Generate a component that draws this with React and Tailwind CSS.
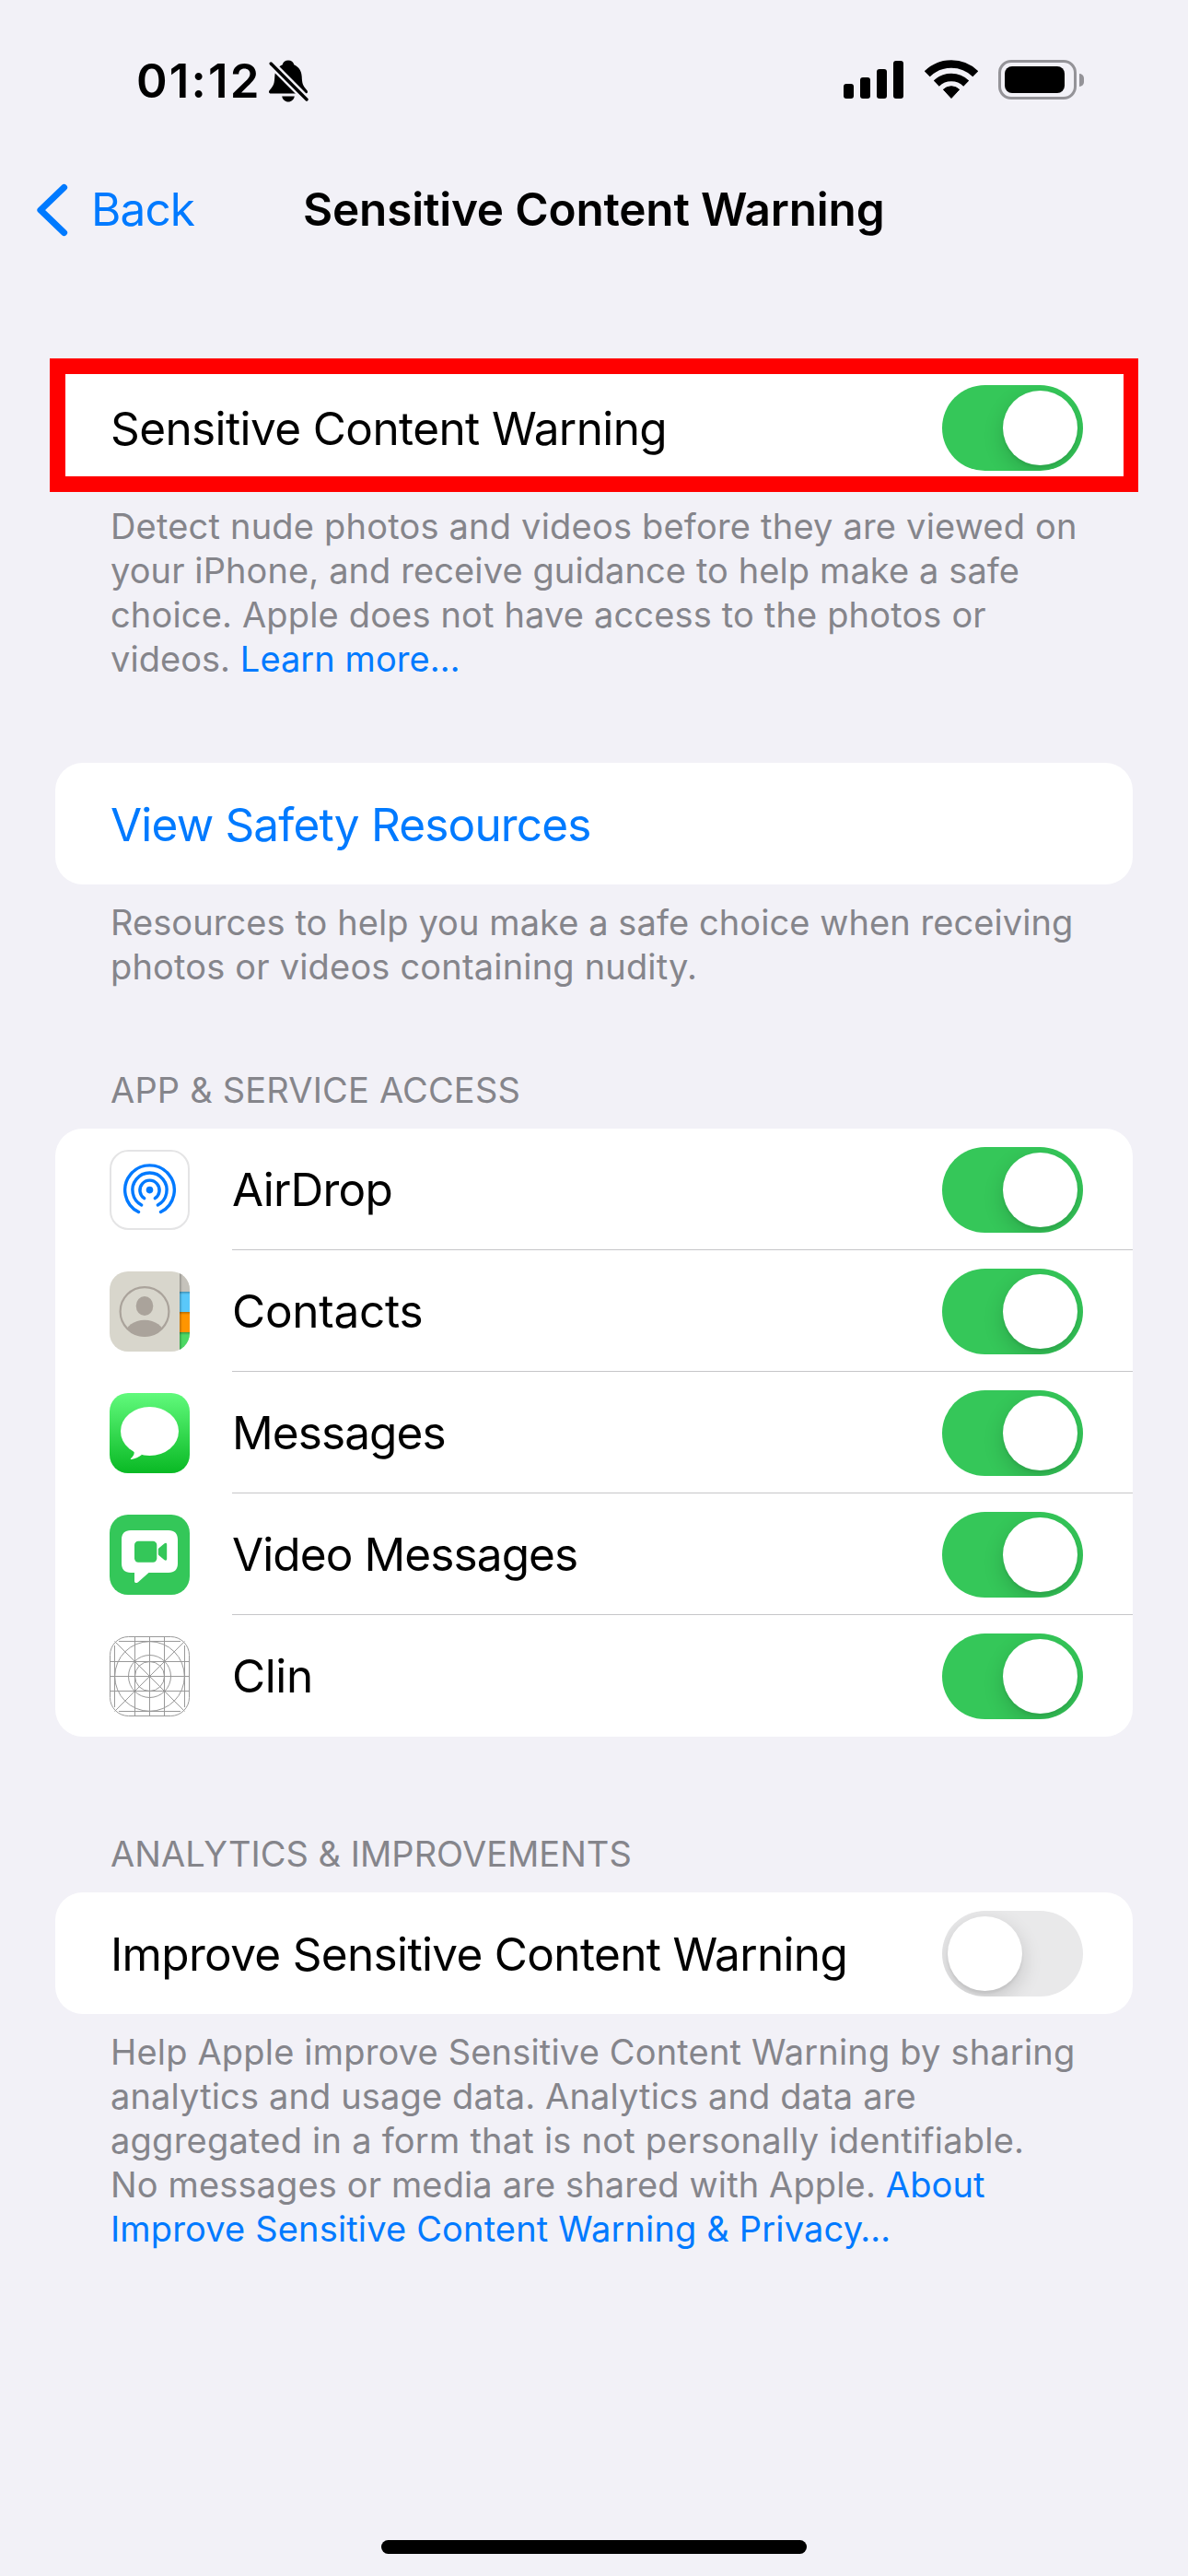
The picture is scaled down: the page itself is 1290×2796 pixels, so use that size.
function BellSlash() {
  return (
    <svg className="ml-[8.500px] h-[47px] w-[44px]" viewBox="0 0 44 47">
      <path
        d="M21 .5c3.2 0 5.700 1.900 6.300 4.700C32.600 7.500 35.400 12 35.700 18c.3 7.500 1.300 10 4.200 13.200 1.500 1.700 2.100 2.600 2.100 3.500 0 1.200-.8 1.800-2.400 1.800H2.400C.8 36.500 0 35.900 0 34.700c0-.9.600-1.800 2.100-3.500C5 28 6 25.500 6.300 18c.3-6 3.100-10.500 8.400-12.800C15.300 2.400 17.800.5 21 .5Z"
        fill="#000"
      />
      <path d="M14.200 39.600h13.600c-.6 3.600-3.400 6-6.800 6s-6.200-2.400-6.800-6Z" fill="#000" />
      <path d="M-2 -.3 46 47.900" stroke="#f2f1f7" strokeWidth="8.400" />
      <path d="M2.200 4 41 43" stroke="#000" strokeWidth="3.400" strokeLinecap="round" />
    </svg>
  );
}

function Signal() {
  return (
    <div className="flex items-end gap-[7px]">
      <span className="h-[16px] w-[11px] rounded-[3px] bg-black" />
      <span className="h-[23px] w-[11px] rounded-[3px] bg-black" />
      <span className="h-[32px] w-[11px] rounded-[3px] bg-black" />
      <span className="h-[41px] w-[11px] rounded-[3px] bg-black" />
    </div>
  );
}

function Wifi() {
  return (
    <svg className="ml-[22.500px] h-[42px] w-[58px]" viewBox="0 0 58 42" fill="none" stroke="#000">
      <path d="M2.700 15.300A37.500 37.500 0 0 1 55.300 15.300" strokeWidth="8.600" />
      <path d="M12.800 25.600A23.300 23.300 0 0 1 45.200 25.600" strokeWidth="8.600" />
      <path d="M29 41.500 20.400 32.200A12.500 12.500 0 0 1 37.600 32.200Z" fill="#000" strokeWidth="1" strokeLinejoin="round" />
    </svg>
  );
}

function Battery() {
  return (
    <div className="ml-[22.500px] flex items-center gap-[3px]">
      <div className="flex h-[43px] w-[85px] items-center rounded-[14px] border-[3px] border-[#949398] pl-[4px]">
        <span className="h-[29px] w-[65px] rounded-[8px] bg-black" />
      </div>
      <span className="h-[14px] w-[5px] rounded-r-[5px] bg-[#949398]" />
    </div>
  );
}

function AirDropIcon() {
  return (
    <svg className="size-[87px]" viewBox="0 0 87 87" fill="none">
      <rect x="1" y="1" width="85" height="85" rx="19.500" fill="#fff" stroke="#e4e4e5" strokeWidth="2" />
      <g stroke="#007aff" strokeWidth="3.400" strokeLinecap="round">
        <path d="M31.500 67.600A26.800 26.800 0 1 1 55.500 67.600" />
        <path d="M34.700 60A18.600 18.600 0 1 1 52.300 60" />
        <path d="M37.700 52.600A10.600 10.600 0 1 1 49.300 52.600" />
      </g>
      <circle cx="43.500" cy="43.600" r="3.800" fill="#007aff" />
    </svg>
  );
}

function ContactsIcon() {
  return (
    <svg className="size-[87px]" viewBox="0 0 87 87" fill="none">
      <defs>
        <clipPath id="contactsTile">
          <rect width="87" height="87" rx="20" />
        </clipPath>
        <clipPath id="contactsFace">
          <circle cx="38" cy="43.500" r="27" />
        </clipPath>
        <linearGradient id="tabShade" x1="0" y1="0" x2="0" y2="1">
          <stop offset="0" stopColor="#000" stopOpacity=".28" />
          <stop offset="1" stopColor="#000" stopOpacity="0" />
        </linearGradient>
        <linearGradient id="spineShade" x1="0" y1="0" x2="1" y2="0">
          <stop offset="0" stopColor="#000" stopOpacity=".25" />
          <stop offset="1" stopColor="#000" stopOpacity="0" />
        </linearGradient>
      </defs>
      <g clipPath="url(#contactsTile)">
        <rect width="87" height="87" fill="#d8d6cc" />
        <rect x="76" width="11" height="22" fill="#c5c2bb" />
        <rect x="76" y="22" width="11" height="22" fill="#5ac8fa" />
        <rect x="76" y="44" width="11" height="22" fill="#ff9500" />
        <rect x="76" y="66" width="11" height="21" fill="#4cd964" />
        <rect x="76" y="22" width="11" height="3" fill="url(#tabShade)" />
        <rect x="76" y="44" width="11" height="3" fill="url(#tabShade)" />
        <rect x="76" y="66" width="11" height="3" fill="url(#tabShade)" />
        <rect x="76" width="3" height="87" fill="url(#spineShade)" />
        <circle cx="38" cy="43.500" r="26.400" stroke="#aaa39b" strokeWidth="2.200" />
        <ellipse cx="38" cy="37.500" rx="9.300" ry="10.500" fill="#aaa39b" />
        <ellipse cx="38" cy="68.500" rx="21" ry="15.800" fill="#aaa39b" clipPath="url(#contactsFace)" />
      </g>
    </svg>
  );
}

function MessagesIcon() {
  return (
    <svg className="size-[87px]" viewBox="0 0 87 87">
      <defs>
        <linearGradient id="messagesTile" x1="0" y1="0" x2="0" y2="1">
          <stop offset="0" stopColor="#61fa7c" />
          <stop offset="1" stopColor="#09b924" />
        </linearGradient>
      </defs>
      <rect width="87" height="87" rx="20" fill="url(#messagesTile)" />
      <ellipse cx="43.500" cy="41.500" rx="31.500" ry="26.500" fill="#fff" />
      <path d="M26 62c1.600 3.200.3 6.300-2.900 8.900-.6.600-.3 1.100.5 1C28 71.300 31.500 69.500 35 67l-4-6Z" fill="#fff" />
    </svg>
  );
}

function VideoMessagesIcon() {
  return (
    <svg className="size-[87px]" viewBox="0 0 87 87">
      <rect width="87" height="87" rx="20" fill="#34c759" />
      <path
        d="M23 17h41c6.500 0 10 3.500 10 10v26c0 6.500-3.500 10-10 10H42.500L31 73.200c-2 1.600-4 1-4-1.200v-9h-4c-6.500 0-10-3.500-10-10V27c0-6.500 3.500-10 10-10Z"
        fill="#fff"
      />
      <rect x="27" y="28.700" width="24.300" height="23" rx="4.200" fill="#34c759" />
      <path d="m53.600 36.300 5.700-4.800c1.500-1.200 2.900-.8 2.900.9v15.700c0 1.700-1.400 2.100-2.900.9l-5.700-4.800c-.6-.5-.8-1-.8-1.700v-4.500c0-.7.200-1.200.8-1.700Z" fill="#34c759" />
    </svg>
  );
}

function ClinIcon() {
  return (
    <svg className="size-[87px]" viewBox="0 0 87 87" fill="none" stroke="#999" strokeWidth="1">
      <rect x=".5" y=".5" width="86" height="86" rx="20" fill="#fff" />
      <path d="M5.500 10v67M27.500 0v87M43.500 0v87M59.500 0v87M81.500 10v67M10 5.500h67M0 27.500h87M0 43.500h87M0 59.500h87M10 81.500h67" />
      <path d="M5.500 5.500l76 76M81.500 5.500l-76 76" />
      <circle cx="43.500" cy="43.500" r="37.800" />
      <circle cx="43.500" cy="43.500" r="23" />
      <circle cx="43.500" cy="43.500" r="16" />
    </svg>
  );
}

function Toggle({ on }) {
  return (
    <div
      role="switch"
      aria-checked={on}
      className={
        "flex h-[93px] w-[153px] shrink-0 overflow-hidden rounded-full p-[6px] " +
        (on ? "justify-end bg-[#35c759]" : "justify-start bg-[#e9e9ea]")
      }
    >
      <span className="size-[81px] rounded-full bg-white shadow-[0_8px_22px_rgba(0,0,0,0.16),0_3px_3px_rgba(0,0,0,0.06)]" />
    </div>
  );
}

function Card({ children }) {
  return <div className="relative mx-[60px] rounded-[30px] bg-white">{children}</div>;
}

function ToggleRow({ label, tracking, on }) {
  return (
    <div className="flex h-[132px] items-center justify-between pt-px pr-[54px] pl-[60px]">
      <span className={"text-[49.500px] leading-[60px] whitespace-nowrap " + tracking}>{label}</span>
      <Toggle on={on} />
    </div>
  );
}

function AppRow({ icon, label, tracking, last }) {
  return (
    <div className="flex h-[132px] pl-[59px]">
      <div className="flex w-[133px] items-center pt-px">{icon}</div>
      <div
        className={
          "flex flex-1 items-center justify-between border-b pt-[2px] pr-[54px] " +
          (last ? "border-transparent" : "border-[#c6c6c8]")
        }
      >
        <span className={"pb-px text-[49.500px] leading-[60px] whitespace-nowrap " + tracking}>{label}</span>
        <Toggle on />
      </div>
    </div>
  );
}

function Line({ tracking, children }) {
  return <span className={"block whitespace-nowrap " + tracking}>{children}</span>;
}

function Footer({ children }) {
  return <p className="mt-[17px] ml-[120px] text-[38px] leading-[48px] text-[#85858b]">{children}</p>;
}

function SectionHeader({ tracking, children }) {
  return (
    <h2 className={"mb-[18px] ml-[120px] text-[38px] leading-[48px] text-[#85858b] " + tracking}>{children}</h2>
  );
}

function Link({ children }) {
  return <a className="text-[#007aff]">{children}</a>;
}

const apps = [
  { label: "AirDrop", icon: <AirDropIcon />, tracking: "tracking-[-0.750px]" },
  { label: "Contacts", icon: <ContactsIcon />, tracking: "tracking-[-0.250px]" },
  { label: "Messages", icon: <MessagesIcon />, tracking: "tracking-[-0.900px]" },
  { label: "Video Messages", icon: <VideoMessagesIcon />, tracking: "tracking-[-0.900px]" },
  { label: "Clin", icon: <ClinIcon />, tracking: "tracking-[-0.400px]" },
];

export default function App() {
  return (
    <div className="flex h-[2796px] w-[1290px] flex-col overflow-hidden bg-[#f2f1f7] font-[Inter,sans-serif] text-black">
      <header className="h-[398px]">
        <div className="flex justify-between pt-[65px] pr-[113px] pl-[148px]">
          <div className="flex">
            <span className="-mt-[7px] text-[51px] leading-[60px] font-semibold tracking-[2.200px]">01:12</span>
            <BellSlash />
          </div>
          <div className="flex h-[43px] items-start">
            <div className="pt-px">
              <Signal />
            </div>
            <Wifi />
            <Battery />
          </div>
        </div>
        <nav className="mt-[79px] grid grid-cols-[329px_1fr] items-center">
          <div className="flex items-center pl-[38.500px]">
            <svg className="h-[58px] w-[36px]" viewBox="0 0 36 58" fill="none">
              <path d="M30.500 4.500 5 29 30.500 53.500" stroke="#007aff" strokeWidth="7.200" strokeLinecap="round" strokeLinejoin="round" />
            </svg>
            <span className="pb-px pl-[24.500px] text-[49.500px] leading-[60px] tracking-[-0.900px] text-[#007aff]">Back</span>
          </div>
          <h1 className="pb-px text-[49.500px] leading-[60px] font-semibold tracking-[-0.200px] whitespace-nowrap">
            Sensitive Content Warning
          </h1>
        </nav>
      </header>

      <section>
        <Card>
          <ToggleRow label="Sensitive Content Warning" tracking="tracking-[-0.600px]" on />
          <div className="absolute -top-[9px] -left-[6px] h-[145px] w-[1182px] border-[17px] border-r-[16px] border-[#ff0000]" />
        </Card>
        <Footer>
          <Line tracking="tracking-[0.200px]">Detect nude photos and videos before they are viewed on</Line>
          <Line tracking="tracking-[0.100px]">your iPhone, and receive guidance to help make a safe</Line>
          <Line tracking="tracking-[0.160px]">choice. Apple does not have access to the photos or</Line>
          <Line tracking="tracking-[0.050px]">
            videos. <Link>Learn more…</Link>
          </Line>
        </Footer>
      </section>

      <section className="mt-[89px]">
        <Card>
          <div className="flex h-[132px] items-center pt-[2px] pl-[60px]">
            <span className="text-[49.500px] leading-[60px] tracking-[-0.820px] text-[#007aff]">View Safety Resources</span>
          </div>
        </Card>
        <Footer>
          <Line tracking="tracking-[0.080px]">Resources to help you make a safe choice when receiving</Line>
          <Line tracking="tracking-[0.180px]">photos or videos containing nudity.</Line>
        </Footer>
      </section>

      <section className="mt-[86px]">
        <SectionHeader tracking="tracking-[0.180px]">APP &amp; SERVICE ACCESS</SectionHeader>
        <Card>
          {apps.map((app, i) => (
            <AppRow key={app.label} {...app} last={i === apps.length - 1} />
          ))}
        </Card>
      </section>

      <section className="mt-[103px]">
        <SectionHeader tracking="tracking-[0.020px]">ANALYTICS &amp; IMPROVEMENTS</SectionHeader>
        <Card>
          <ToggleRow label="Improve Sensitive Content Warning" tracking="tracking-[-0.670px]" on={false} />
        </Card>
        <Footer>
          <Line tracking="tracking-[0.180px]">Help Apple improve Sensitive Content Warning by sharing</Line>
          <Line tracking="tracking-[0.140px]">analytics and usage data. Analytics and data are</Line>
          <Line tracking="tracking-[0.230px]">aggregated in a form that is not personally identifiable.</Line>
          <Line tracking="tracking-[0.130px]">
            No messages or media are shared with Apple. <Link>About</Link>
          </Line>
          <Line tracking="tracking-[0.160px]">
            <Link>Improve Sensitive Content Warning &amp; Privacy…</Link>
          </Line>
        </Footer>
      </section>

      <div className="mx-auto mt-auto mb-[24px] h-[15px] w-[462px] rounded-full bg-black" />
    </div>
  );
}
